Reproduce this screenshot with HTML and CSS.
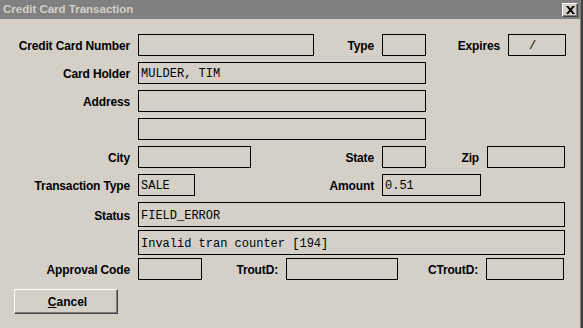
FILE: index.html
```html
<!DOCTYPE html>
<html lang="en">
<head>
    <meta charset="UTF-8">
    <title>Credit Card Transaction</title>
    <link rel="stylesheet" href="styles.css">
</head>
<body>
    <div class="window">
        <div class="titlebar">
            <span class="title">Credit Card Transaction</span>
            <button class="close-btn" aria-label="Close">
                <svg width="9" height="8" viewBox="0 0 9 8">
                    <path d="M0 0h2.4l2.1 2.6L6.6 0H9L5.8 4 9 8H6.6L4.5 5.4 2.4 8H0l3.2-4z" fill="#000"/>
                </svg>
            </button>
        </div>

        <div class="form">
            <div class="row">
                <label class="lbl lbl-main">Credit Card Number</label>
                <div class="field w-card"></div>
                <label class="lbl lbl-type">Type</label>
                <div class="field w-small"></div>
                <label class="lbl lbl-expires">Expires</label>
                <div class="field w-expires">/</div>
            </div>

            <div class="row">
                <label class="lbl lbl-main">Card Holder</label>
                <div class="field w-wide">MULDER, TIM</div>
            </div>

            <div class="row">
                <label class="lbl lbl-main">Address</label>
                <div class="field w-wide"></div>
            </div>

            <div class="row">
                <label class="lbl lbl-main"></label>
                <div class="field w-wide"></div>
            </div>

            <div class="row">
                <label class="lbl lbl-main">City</label>
                <div class="field w-city"></div>
                <label class="lbl lbl-state">State</label>
                <div class="field w-small"></div>
                <label class="lbl lbl-zip">Zip</label>
                <div class="field w-zip"></div>
            </div>

            <div class="row">
                <label class="lbl lbl-main">Transaction Type</label>
                <div class="field w-trantype">SALE</div>
                <label class="lbl lbl-amount">Amount</label>
                <div class="field w-amount">0.51</div>
            </div>

            <div class="row row-status">
                <label class="lbl lbl-main">Status</label>
                <div class="field w-status">FIELD_ERROR</div>
            </div>

            <div class="row row-status">
                <label class="lbl lbl-main"></label>
                <div class="field w-status">Invalid tran counter [194]</div>
            </div>

            <div class="row">
                <label class="lbl lbl-main">Approval Code</label>
                <div class="field w-approval"></div>
                <label class="lbl lbl-trout">TroutD:</label>
                <div class="field w-trout"></div>
                <label class="lbl lbl-ctrout">CTroutD:</label>
                <div class="field w-zip"></div>
            </div>

            <button class="cancel-btn"><u>C</u>ancel</button>
        </div>
    </div>
</body>
</html>
```

FILE: styles.css
```css
body {
    margin: 0;
    background-color: #d4d0c8;
    font-family: "Liberation Sans", Arial, sans-serif;
}

.window {
    width: 581px;
    height: 328px;
    border-right: 2px solid #404040;
    background-color: #d4d0c8;
    box-shadow: inset -1px 0 0 #808080;
}

.titlebar {
    height: 19px;
    background-color: #808080;
    display: flex;
    align-items: center;
    justify-content: space-between;
    padding: 0 3px 0 3px;
}

.title {
    color: #d4d0c8;
    font-size: 11.5px;
    font-weight: bold;
    margin-top: -1px;
}

.close-btn {
    width: 16px;
    height: 14px;
    padding: 0;
    display: flex;
    align-items: center;
    justify-content: center;
    background-color: #d4d0c8;
    border: 1px solid;
    border-color: #ffffff #404040 #404040 #ffffff;
    box-shadow: inset -1px -1px 0 #808080;
}

.form {
    padding-top: 15px;
}

.row {
    display: flex;
    align-items: center;
    height: 22px;
    margin-bottom: 6px;
}

.row-status {
    height: 25px;
    margin-bottom: 3px;
}

.lbl {
    box-sizing: border-box;
    padding: 2px 8px 0 0;
    text-align: right;
    font-size: 12px;
    font-weight: bold;
    letter-spacing: -0.15px;
    color: #000;
    white-space: nowrap;
}

.lbl-main { width: 138px; }
.lbl-type { width: 68px; }
.lbl-expires { width: 82px; }
.lbl-state { width: 131px; }
.lbl-zip { width: 61px; }
.lbl-amount { width: 187px; }
.lbl-trout { width: 84px; }
.lbl-ctrout { width: 88px; }

.field {
    box-sizing: border-box;
    height: 100%;
    border: 1px solid #000;
    padding: 2px 0 0 2px;
    display: flex;
    align-items: center;
    font-family: "Liberation Mono", "Courier New", monospace;
    font-size: 12px;
    color: #000;
    white-space: nowrap;
}

.w-card { width: 176px; }
.w-small { width: 44px; }
.w-expires { width: 58px; padding-left: 20px; }
.w-wide { width: 288px; }
.w-city { width: 113px; }
.w-zip { width: 78px; }
.w-trantype { width: 57px; }
.w-amount { width: 99px; }
.w-status { width: 427px; }
.w-approval { width: 64px; }
.w-trout { width: 112px; }

.cancel-btn {
    display: block;
    box-sizing: border-box;
    width: 104px;
    height: 25px;
    margin: 9px 0 0 14px;
    padding: 1px 0 0 3px;
    background-color: #d4d0c8;
    border: 1px solid;
    border-color: #ffffff #404040 #404040 #ffffff;
    box-shadow: inset -1px -1px 0 #808080;
    font-family: "Liberation Sans", Arial, sans-serif;
    font-size: 12px;
    font-weight: bold;
    color: #000;
}
```
